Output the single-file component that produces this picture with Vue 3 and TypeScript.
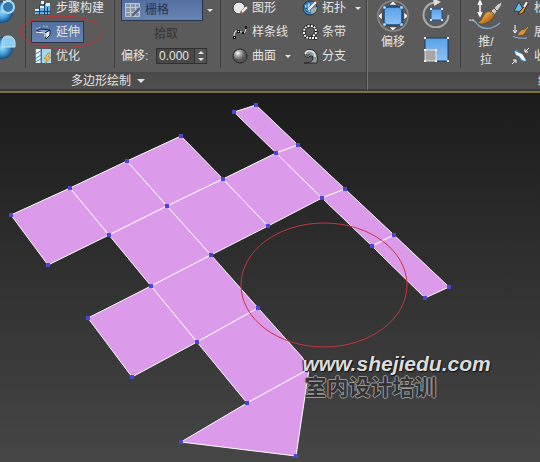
<script setup lang="ts">
import { ref } from 'vue'

type Point = [number, number]

const offset = ref('0.000')

const step = (amount: number) => {
  offset.value = ((parseFloat(offset.value) || 0) + amount).toFixed(3)
}

const points: Record<string, Point> = {
  A: [11, 215], B: [70, 188], C: [127, 161], D: [181, 136],
  E: [48, 265], F: [109, 235], G: [167, 206], H: [223, 179],
  I: [276, 153], J: [298, 145], K: [234, 112], L: [256, 105],
  M: [322, 198], N: [345, 189], O: [268, 226], P: [211, 255],
  Q: [151, 286], R: [88, 318], S: [132, 377], T: [197, 342],
  U: [258, 308], V: [247, 403], X: [181, 442], Y: [296, 456],
  Z: [372, 246], a: [394, 235], b: [425, 298], c: [449, 287],
}
const hidden: Record<string, Point> = { W: [309, 369], w: [302, 357] }

const faces = ['ABFE', 'BCGF', 'CDHG', 'FGPQ', 'GHOP', 'HIMO', 'KLJI', 'IJNM', 'MNaZ', 'Zacb', 'QPUT', 'RQTS', 'TUwWV', 'VWYX']

const outline = (face: string): string =>
  face.split('').map((k) => (points[k] ?? hidden[k]).join(',')).join(' ')
</script>

<template>
  <main class="app">
    <header class="ribbon">
      <section class="panel polydraw">
        <div class="tools">
          <div class="group edge">
            <button class="orb" aria-label="拖动">
              <svg width="16" height="26" viewBox="0 0 16 26">
                <circle cx="2" cy="14" r="11" fill="url(#orbBlue)" />
                <circle cx="8" cy="9" r="6" fill="#3478b4" stroke="#a9d8f4" stroke-width="2" />
                <path d="M3 3l3 2M6 1l2 3M11 1L9 4" stroke="#e8f5fb" />
              </svg>
            </button>
            <button class="orb" aria-label="一致">
              <svg width="16" height="26" viewBox="0 0 16 26">
                <circle cx="2" cy="14" r="11" fill="url(#orbBlue)" />
                <path d="M2 13V8q0-6 6-6t7 6v5z" fill="#8fcdf0" stroke="#bfe5f7" />
              </svg>
            </button>
          </div>

          <div class="group build">
            <button class="tool">
              <svg class="icon" width="16" height="16" viewBox="0 0 16 16">
                <path d="M0 9h4v5H0zM5 6h4v8H5zM10 4h5v10h-5z" fill="#5fb0ea" />
                <path d="M0 9h4v2H0zM5 6h4v2H5zM11 3h4v3h-4zM6 1h3v3H6z" fill="#d6f0fc" />
                <path d="M0 11.500h16M4.500 5v10M9.500 3v12M12.500 7v8" stroke="#1e4161" />
              </svg>
              步骤构建
            </button>
            <span class="marked">
              <button class="tool active">
                <svg class="icon" width="16" height="16" viewBox="0 0 16 16">
                  <path d="M1 5l5-2M8 2l6 1" stroke="#a9c3e6" stroke-dasharray="2 1" />
                  <path d="M1 7l5-2 9 1-5 3z" fill="#86a6d6" stroke="#16233a" />
                  <path d="M10 9l5-3v5l-4 4z" fill="#dfeaf6" stroke="#16233a" />
                  <path d="M1 8l9 1v4" fill="none" stroke="#fff" />
                </svg>
                延伸
              </button>
              <svg class="ring" width="84" height="36" viewBox="0 0 84 36">
                <ellipse cx="42" cy="18" rx="41" ry="16" fill="none" stroke="#c92e39" />
              </svg>
            </span>
            <button class="tool">
              <svg class="icon" width="16" height="16" viewBox="0 0 16 16">
                <path d="M0 1h6v14H0z" fill="#e3f3fa" />
                <path d="M7 1h9v14H7z" fill="#a6d5ef" />
                <path d="M.5 1v14M6 1v14M0 6l6-3M0 11l6-4M0 14l6-3" stroke="#4a88ad" fill="none" />
                <path d="M13 5l-4 6h3l-2 5 6-7h-3l2-4z" fill="#f8c33c" stroke="#aa6a13" stroke-width=".5" />
              </svg>
              优化
            </button>
          </div>

          <div class="group snap">
            <div class="line">
              <button class="tool active grid-tool">
                <svg class="icon" width="16" height="16" viewBox="0 0 16 16">
                  <path d="M.5 1.500h14v13H.5zM5.500 1v14M10.500 1v14M0 5.500h15M0 10.500h15" fill="#8b97ab" stroke="#c1c8d3" />
                  <path d="M6 15l1-3 7-7 2 2-7 7z" fill="#56657c" stroke="#aab4c3" stroke-width=".5" />
                </svg>
                栅格
              </button>
              <button class="more" aria-label="栅格选项"><i class="caret"></i></button>
            </div>
            <button class="pick" disabled>拾取</button>
            <div class="line">
              <label for="offset">偏移:</label>
              <span class="spinner">
                <input id="offset" v-model="offset" type="text" />
                <span class="steps">
                  <button aria-label="增加" @click="step(0.1)"><i class="caret up"></i></button>
                  <button aria-label="减少" @click="step(-0.1)"><i class="caret"></i></button>
                </span>
              </span>
            </div>
          </div>

          <div class="group shapes">
            <button class="tool">
              <svg class="icon" width="16" height="16" viewBox="0 0 16 16">
                <circle cx="7" cy="8" r="6" fill="#e7e7e7" stroke="#333" />
                <path d="M8 14l1-3 5-5 2 2-5 5z" fill="#f2eadf" stroke="#5d5148" stroke-width=".5" />
                <path d="M8 14l1-3 2 2z" fill="#9d4b3f" />
              </svg>
              图形
            </button>
            <button class="tool">
              <svg class="icon" width="16" height="16" viewBox="0 0 16 16">
                <circle cx="8" cy="8" r="7" fill="#418fd0" stroke="#1f2d3a" />
                <path d="M2 5l6-3 1 11-5-2zM1 8l8 1M5 3v9" fill="#a8d9f4" stroke="#17609c" />
                <path d="M9 14q6-1 6-7L9 9z" fill="#aaa" />
                <path d="M6 8l7-7 2 2-7 7-3 1z" fill="#eee" stroke="#444" stroke-width=".5" />
                <path d="M13 1l1-1 2 2-1 1z" fill="#cb4a31" />
              </svg>
              拓扑
              <i class="caret"></i>
            </button>
            <button class="tool">
              <svg class="icon" width="16" height="16" viewBox="0 0 16 16">
                <path d="M2 13q0-7 4-6t5 2q3 0 3-6" fill="none" stroke="#eee" />
                <path d="M1 12h3v3H1zM5 6h3v3H5zM13 2h2v3h-2zM10 8h2v2h-2z" fill="#111" />
                <path d="M2 13h1v1H2zM6 7h1v1H6z" fill="#fff" />
              </svg>
              样条线
            </button>
            <button class="tool">
              <svg class="icon" width="16" height="16" viewBox="0 0 16 16">
                <path d="M15 14h-4v-2q3-2 3-4 0-6-6-6-6 0-6 6 0 6 7 6" fill="none" stroke="#111" stroke-width="3" />
                <path d="M15 14h-4v-2q3-2 3-4 0-6-6-6-6 0-6 6 0 6 7 6" fill="none" stroke="#fff" stroke-width="2" stroke-dasharray="2 1" />
              </svg>
              条带
            </button>
            <button class="tool">
              <svg class="icon" width="16" height="16" viewBox="0 0 16 16">
                <circle cx="8" cy="8" r="7" fill="url(#ball)" stroke="#252525" />
              </svg>
              曲面
              <i class="caret"></i>
            </button>
            <button class="tool">
              <svg class="icon" width="16" height="16" viewBox="0 0 16 16">
                <path d="M2 15q9 0 9-5 0-3-3-2-1 2-4 1-3-2-1-5 3-4 8-2 6 3 4 13z" fill="#929da1" stroke="#252a2c" />
                <path d="M3 6q1-4 6-3 4 1 4 6" fill="none" stroke="#dce2e3" stroke-width="1.500" />
                <path d="M4 7q2 1 4-1" fill="none" stroke="#333" />
              </svg>
              分支
            </button>
          </div>
        </div>
        <footer class="caption">多边形绘制 <i class="caret big"></i></footer>
      </section>

      <section class="panel deform">
        <div class="tools">
          <div class="group transform">
            <button class="large">
              <svg width="34" height="34" viewBox="0 0 34 34">
                <circle cx="17" cy="17" r="15" fill="none" stroke="#8a8a8a" stroke-width="1.500" />
                <path d="M13 6l4-4 4 4zM13 28l4 4 4-4zM6 13l-4 4 4 4zM28 13l4 4-4 4z" fill="#fff" stroke="#222" stroke-width=".5" />
                <rect x="8" y="8" width="18" height="18" fill="url(#tile)" stroke="#154a83" stroke-width="1.500" />
                <path d="M7 7h3v3H7zM24 7h3v3h-3zM7 24h3v3H7zM24 24h3v3h-3z" fill="#c7e7fb" stroke="#154a83" stroke-width=".5" />
              </svg>
              偏移
            </button>
            <div class="stack">
              <button aria-label="旋转">
                <svg width="28" height="30" viewBox="0 0 28 30">
                  <path d="M10 5a12.500 12.500 0 1 0 16.500 12M16 4l-6 1" fill="none" stroke="#aaa" stroke-width="2" />
                  <path d="M11 0l8 4-7 4z" fill="#ddd" />
                  <rect x="9" y="11" width="11" height="11" fill="url(#tile)" stroke="#12569b" />
                  <path d="M8 10h2v2H8zM19 10h2v2h-2zM8 21h2v2H8zM19 21h2v2h-2z" fill="#d1ecfc" />
                </svg>
              </button>
              <button aria-label="缩放">
                <svg width="28" height="28" viewBox="0 0 28 28">
                  <rect x="3" y="2" width="23" height="23" fill="url(#tile)" stroke="#17385e" />
                  <rect x="3" y="14" width="11" height="11" fill="#aaa5a2" stroke="#e4e8eb" />
                  <path d="M2 1h2v2H2zM25 1h2v2h-2zM25 24h2v2h-2zM13 13h2v2h-2zM2 24h2v2H2zM2 13h2v2H2zM13 24h2v2h-2z" fill="#eef8ff" />
                </svg>
              </button>
            </div>
          </div>
          <div class="group brushes">
            <button class="large push">
              <svg width="36" height="34" viewBox="0 0 36 34">
                <path d="M2 21q5 0 9 6 10 6 21-3" fill="none" stroke="#80a3c1" stroke-width="1.500" />
                <path d="M1 21h5" stroke="#ddd" stroke-dasharray="2 1" />
                <path d="M12 3v13M10 6l2-4 2 4M10 13l2 4 2-4" fill="none" stroke="#fff" stroke-width="1.500" />
                <path d="M9 24q4-1 6-6 3-7 9-5 5 3-1 8-6 6-14 3z" fill="url(#brush)" stroke="#593914" stroke-width=".5" />
                <path d="M22 13l8-8 4-2-1 4-7 9z" fill="#c9cdcf" stroke="#444" stroke-width=".5" />
                <path d="M23 12l3 3M26 9l3 3" stroke="#6e4a24" />
              </svg>
              推/<br />拉
            </button>
            <div class="rows">
              <button class="tool">
                <svg class="icon" width="18" height="16" viewBox="0 0 18 16">
                  <path d="M2 11l5-9 6 10z" fill="#69b7e7" stroke="#1f4563" />
                  <path d="M6 14q3-5 6-7l3-6 1 3-3 5q-2 6-7 5z" fill="#d89535" stroke="#3d2a17" />
                  <path d="M12 7l3-5" stroke="#eee" stroke-width="2" />
                </svg>
                松弛
              </button>
              <button class="tool">
                <svg class="icon" width="18" height="16" viewBox="0 0 18 16">
                  <path d="M3 1v7M1 6l2 3 2-3" fill="none" stroke="#fff" />
                  <path d="M1 12q4 3 14 2" fill="none" stroke="#92bcd9" />
                  <path d="M5 11l4-5 4-1 3-3 1 1-3 4q-2 6-9 4z" fill="#d59539" stroke="#49351c" stroke-width=".5" />
                </svg>
                展平
              </button>
              <button class="tool">
                <svg class="icon" width="18" height="16" viewBox="0 0 18 16">
                  <path d="M1 3l4-2 10 11-4 3z" fill="#357db2" />
                  <path d="M3 3l4 2 3 1 2 3 2 4-4-1-3-4-3-1z" fill="#fff" />
                  <path d="M17 0l-4 4M13 1v3h3M0 16l4-4M1 12h3v3" fill="none" stroke="#fff" />
                </svg>
                收缩
              </button>
            </div>
          </div>
        </div>
        <footer class="caption">绘制变形</footer>
      </section>
    </header>

    <section class="viewport">
      <svg class="mesh" viewBox="0 93 540 369" aria-label="多边形网格">
        <g class="faces">
          <polygon v-for="face in faces" :key="face" :points="outline(face)" />
        </g>
        <g class="vertices">
          <rect v-for="(p, key) in points" :key="key" :x="p[0] - 2" :y="p[1] - 2" width="4" height="4" />
        </g>
        <ellipse class="callout" cx="324" cy="285" rx="83" ry="62" />
      </svg>
      <div class="watermark">
        <a href="#">www.shejiedu.com</a>
        <span>室内设计培训</span>
      </div>
    </section>

    <svg class="defs" width="0" height="0" aria-hidden="true">
      <defs>
        <radialGradient id="orbBlue"><stop stop-color="#9bd9fa" /><stop offset=".6" stop-color="#3c94d2" /><stop offset="1" stop-color="#174a7a" /></radialGradient>
        <radialGradient id="ball" cx=".35" cy=".3"><stop stop-color="#fff" /><stop offset=".4" stop-color="#aaa" /><stop offset="1" stop-color="#555" /></radialGradient>
        <linearGradient id="tile" x2="0" y2="1"><stop stop-color="#5aa0e6" /><stop offset="1" stop-color="#8cc1f7" /></linearGradient>
        <linearGradient id="brush" x2="1" y2="1"><stop stop-color="#f9cf72" /><stop offset=".5" stop-color="#d98d2b" /><stop offset="1" stop-color="#6d3c12" /></linearGradient>
      </defs>
    </svg>
  </main>
</template>

<style>
body {
  margin: 0;
  background: #464646;
}
</style>

<style scoped>
.app {
  font: 12px/16px "Liberation Sans", "Noto Sans CJK SC", sans-serif;
  color: #e4e4e4;
  overflow: hidden;
}
.app *,
.app {
  box-sizing: border-box;
}
button,
input {
  font: inherit;
  color: inherit;
  padding: 0;
  border: 0;
  background: none;
}
svg {
  display: block;
  flex: none;
}
.defs {
  position: absolute;
}
.ribbon {
  display: flex;
  background: #5b5b5b;
  border-bottom: 2px solid #7b7144;
  overflow: hidden;
}
.panel {
  display: flex;
  flex-direction: column;
  border-bottom: 2px solid #3b3a39;
}
.polydraw {
  flex: none;
  border-right: 1px solid #3e3e3e;
}
.deform {
  flex: 1;
  min-width: 0;
  border-left: 1px solid #777;
  overflow: hidden;
}
.tools {
  display: flex;
  height: 72px;
  overflow: hidden;
}
.group {
  flex: none;
  margin-bottom: 4px;
  border-right: 1px solid #3c3c3c;
}
.group:last-child {
  border-right: 0;
}
.tool {
  display: flex;
  align-items: center;
  gap: 4px;
  height: 22px;
  padding: 0 3px;
  border: 1px solid transparent;
  white-space: nowrap;
}
.active {
  background: linear-gradient(#536f9f, #6784b4);
  border-color: #29344a;
}
.edge {
  display: flex;
  flex-direction: column;
  gap: 10px;
  width: 26px;
}
.edge .orb:first-child {
  margin-top: -2px;
}
.orb {
  width: 16px;
}
.build,
.rows {
  display: flex;
  flex-direction: column;
  align-items: flex-start;
  gap: 2px;
  margin-top: -3px;
}
.build {
  width: 89px;
  padding-left: 5px;
}
.build .tool {
  gap: 5px;
}
.marked {
  position: relative;
}
.ring {
  position: absolute;
  left: -12px;
  top: -7px;
  z-index: 1;
}
.snap {
  display: flex;
  flex-direction: column;
  gap: 1px;
  width: 106px;
  margin-top: -1px;
  padding-left: 6px;
}
.line {
  display: flex;
  align-items: center;
  height: 22px;
}
.line label {
  width: 35px;
}
.grid-tool {
  width: 82px;
  color: #293448;
}
.more {
  display: flex;
  padding: 4px;
}
.pick {
  width: 90px;
  height: 22px;
  padding-top: 2px;
  color: #343434;
}
.caret {
  width: 0;
  height: 0;
  border: 3px solid transparent;
  border-top-color: currentColor;
  border-bottom: 0;
}
.caret.up {
  border-top: 0;
  border-bottom: 3px solid currentColor;
}
.caret.big {
  border-width: 4px 4px 0;
}
.shapes .caret {
  margin-left: 5px;
}
.spinner {
  display: flex;
  height: 16px;
  border: 1px solid #303030;
  background: #484848;
}
.spinner input {
  width: 37px;
  height: 14px;
  padding-left: 2px;
  outline: 0;
}
.steps {
  display: grid;
  width: 12px;
  border-left: 1px solid #303030;
}
.steps button {
  display: grid;
  place-items: center;
  background: #555;
}
.shapes {
  display: grid;
  grid-template-columns: 70px 68px;
  grid-auto-rows: 22px;
  gap: 2px 0;
  width: 145px;
  margin-top: -3px;
  padding-left: 7px;
}
.caption {
  display: flex;
  align-items: center;
  justify-content: center;
  gap: 6px;
  height: 17px;
  padding-right: 150px;
  background: linear-gradient(#484848, #515151);
  white-space: nowrap;
}
.deform .caption {
  justify-content: flex-start;
  padding: 0 0 0 170px;
}
.transform {
  display: flex;
  gap: 12px;
  width: 93px;
  padding-left: 8px;
}
.large {
  display: flex;
  flex-direction: column;
  align-items: center;
  align-self: flex-start;
  margin-top: -1px;
  line-height: 18px;
}
.stack {
  display: flex;
  flex-direction: column;
  gap: 8px;
  margin-top: -2px;
}
.brushes {
  display: flex;
}
.push {
  width: 36px;
  margin-left: 7px;
}
.brushes .rows {
  margin-left: 6px;
}
.brushes .tool {
  padding: 0 3px 0 1px;
}
.viewport {
  position: relative;
  background: linear-gradient(#1b1b1b, #464646);
}
.mesh {
  width: 100%;
}
.faces polygon {
  fill: #dc9aea;
  stroke: #fff;
  stroke-linejoin: round;
}
.vertices rect {
  fill: #4d46d0;
}
.callout {
  fill: none;
  stroke: #c9343f;
}
.watermark {
  position: absolute;
  left: 56%;
  top: 261px;
  display: flex;
  flex-direction: column;
}
.watermark a {
  font: italic bold 21px/20px "Liberation Sans", sans-serif;
  color: #dcdcdc;
  text-decoration: none;
  text-shadow: 1px 1px 1px #111, -1px 0 1px #222;
}
.watermark span {
  padding-left: 2px;
  font: bold 22px/22px "Noto Sans CJK SC", sans-serif;
  color: #323232;
  text-shadow: 1px 0 #999, -1px 0 #999, 0 1px #999, 0 -1px #999;
}
</style>
